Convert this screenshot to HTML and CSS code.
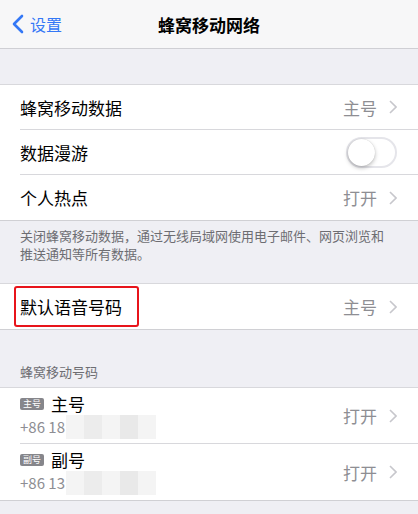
FILE: index.html
```html
<!DOCTYPE html>
<html lang="zh-CN">
<head>
    <meta charset="UTF-8">
    <meta name="viewport" content="width=device-width, initial-scale=1.0">
    <title>蜂窝移动网络</title>
    <link rel="stylesheet" href="styles.css">
</head>
<body>

    <!-- Navigation bar -->
    <div class="nav-bar">
        <a class="back" href="#">
            <svg class="back-icon" width="12" height="20" viewBox="0 0 12 20">
                <path d="M10 2 L2 10 L10 18" fill="none" stroke="#3478f6" stroke-width="2.6" stroke-linecap="round" stroke-linejoin="round"/>
            </svg>
            <span>设置</span>
        </a>
        <div class="nav-title">蜂窝移动网络</div>
    </div>

    <div class="gap-top"></div>

    <!-- Main cellular group -->
    <div class="group">
        <div class="row">
            <span class="label">蜂窝移动数据</span>
            <span class="value">主号</span>
            <svg class="chevron" width="8" height="14" viewBox="0 0 8 14"><path d="M1 1 L7 7 L1 13" fill="none" stroke="#c7c7cc" stroke-width="1.6"/></svg>
        </div>
        <div class="row">
            <span class="label">数据漫游</span>
            <div class="switch"><div class="knob"></div></div>
        </div>
        <div class="row">
            <span class="label">个人热点</span>
            <span class="value">打开</span>
            <svg class="chevron" width="8" height="14" viewBox="0 0 8 14"><path d="M1 1 L7 7 L1 13" fill="none" stroke="#c7c7cc" stroke-width="1.6"/></svg>
        </div>
    </div>

    <p class="footer-note">关闭蜂窝移动数据，通过无线局域网使用电子邮件、网页浏览和<br>推送通知等所有数据。</p>

    <!-- Default voice line -->
    <div class="group">
        <div class="row highlighted">
            <span class="label">默认语音号码</span>
            <span class="value">主号</span>
            <svg class="chevron" width="8" height="14" viewBox="0 0 8 14"><path d="M1 1 L7 7 L1 13" fill="none" stroke="#c7c7cc" stroke-width="1.6"/></svg>
            <div class="mark-box"></div>
        </div>
    </div>

    <div class="section-header">蜂窝移动号码</div>

    <!-- Phone numbers -->
    <div class="group">
        <div class="row tall">
            <div class="line-info">
                <div class="line-title"><span class="badge">主号</span>主号</div>
                <div class="line-number">+86 18<span class="blur"><i></i><i></i><i></i><i></i><i></i></span></div>
            </div>
            <span class="value">打开</span>
            <svg class="chevron" width="8" height="14" viewBox="0 0 8 14"><path d="M1 1 L7 7 L1 13" fill="none" stroke="#c7c7cc" stroke-width="1.6"/></svg>
        </div>
        <div class="row tall">
            <div class="line-info">
                <div class="line-title"><span class="badge">副号</span>副号</div>
                <div class="line-number">+86 13<span class="blur"><i></i><i></i><i></i><i></i><i></i></span></div>
            </div>
            <span class="value">打开</span>
            <svg class="chevron" width="8" height="14" viewBox="0 0 8 14"><path d="M1 1 L7 7 L1 13" fill="none" stroke="#c7c7cc" stroke-width="1.6"/></svg>
        </div>
    </div>

</body>
</html>
```

FILE: styles.css
```css
/* Reset */
* {
    margin: 0;
    padding: 0;
    box-sizing: border-box;
    font-family: "Noto Sans CJK SC", "Liberation Sans", sans-serif;
}

body {
    width: 418px;
    height: 514px;
    overflow: hidden;
    background-color: #efeff4;
    color: #000;
}

/* Navigation bar */
.nav-bar {
    height: 49px;
    background-color: #f7f7f8;
    border-bottom: 1px solid #cfcfd4;
    display: flex;
    align-items: center;
    justify-content: center;
    position: relative;
}

.back {
    position: absolute;
    left: 12px;
    top: 0;
    height: 48px;
    display: flex;
    align-items: center;
    gap: 6px;
    color: #3478f6;
    text-decoration: none;
    font-size: 16px;
}

.nav-title {
    font-size: 17px;
    font-weight: 600;
}

.gap-top {
    height: 35px;
}

/* Grouped table */
.group {
    background-color: #fff;
    border-top: 1px solid #d8d8dc;
    border-bottom: 1px solid #d0d0d4;
}

.row {
    height: 45px;
    display: flex;
    align-items: center;
    padding-right: 21px;
    margin-left: 20px;
    border-bottom: 1px solid #d8d8dc;
    position: relative;
}

.row:last-child {
    border-bottom: none;
}

.row.tall {
    height: 56px;
}

.label {
    font-size: 17px;
    flex-grow: 1;
}

.value {
    font-size: 17px;
    color: #8e8e93;
    margin-right: 12px;
}

.chevron {
    display: block;
}

/* Switch (off) */
.switch {
    width: 51px;
    height: 31px;
    border-radius: 16px;
    border: 2px solid #e5e5ea;
    background-color: #fff;
    position: relative;
}

.knob {
    width: 27px;
    height: 27px;
    border-radius: 50%;
    background-color: #fff;
    box-shadow: 0 2px 4px rgba(0, 0, 0, 0.25), 0 0 1px rgba(0, 0, 0, 0.2);
}

/* Footer and header text */
.footer-note {
    font-size: 13px;
    line-height: 18px;
    color: #6d6d72;
    padding: 6px 20px 20px 20px;
}

.section-header {
    font-size: 13px;
    line-height: 18px;
    color: #6d6d72;
    padding: 33px 20px 6px 20px;
}

/* Red annotation box */
.mark-box {
    position: absolute;
    left: -6px;
    top: 2px;
    width: 125px;
    height: 41px;
    border: 2px solid #e8141b;
    border-radius: 3px;
}

/* Phone number rows */
.line-info {
    flex-grow: 1;
}

.line-title {
    font-size: 17px;
    line-height: 22px;
    display: flex;
    align-items: center;
}

.badge {
    background-color: #86868b;
    color: #fff;
    font-size: 9px;
    line-height: 12px;
    width: 24px;
    text-align: center;
    border-radius: 2px;
    margin-right: 7px;
}

.line-number {
    font-size: 15px;
    line-height: 20px;
    color: #8e8e93;
    display: flex;
    align-items: center;
}

.blur {
    display: flex;
    height: 24px;
    margin-left: 1px;
}

.blur i {
    width: 18px;
    height: 24px;
    background-color: #f4f4f4;
}

.blur i:nth-child(2) {
    background-color: #ececec;
}

.blur i:nth-child(4) {
    background-color: #e9e9e9;
}
```
